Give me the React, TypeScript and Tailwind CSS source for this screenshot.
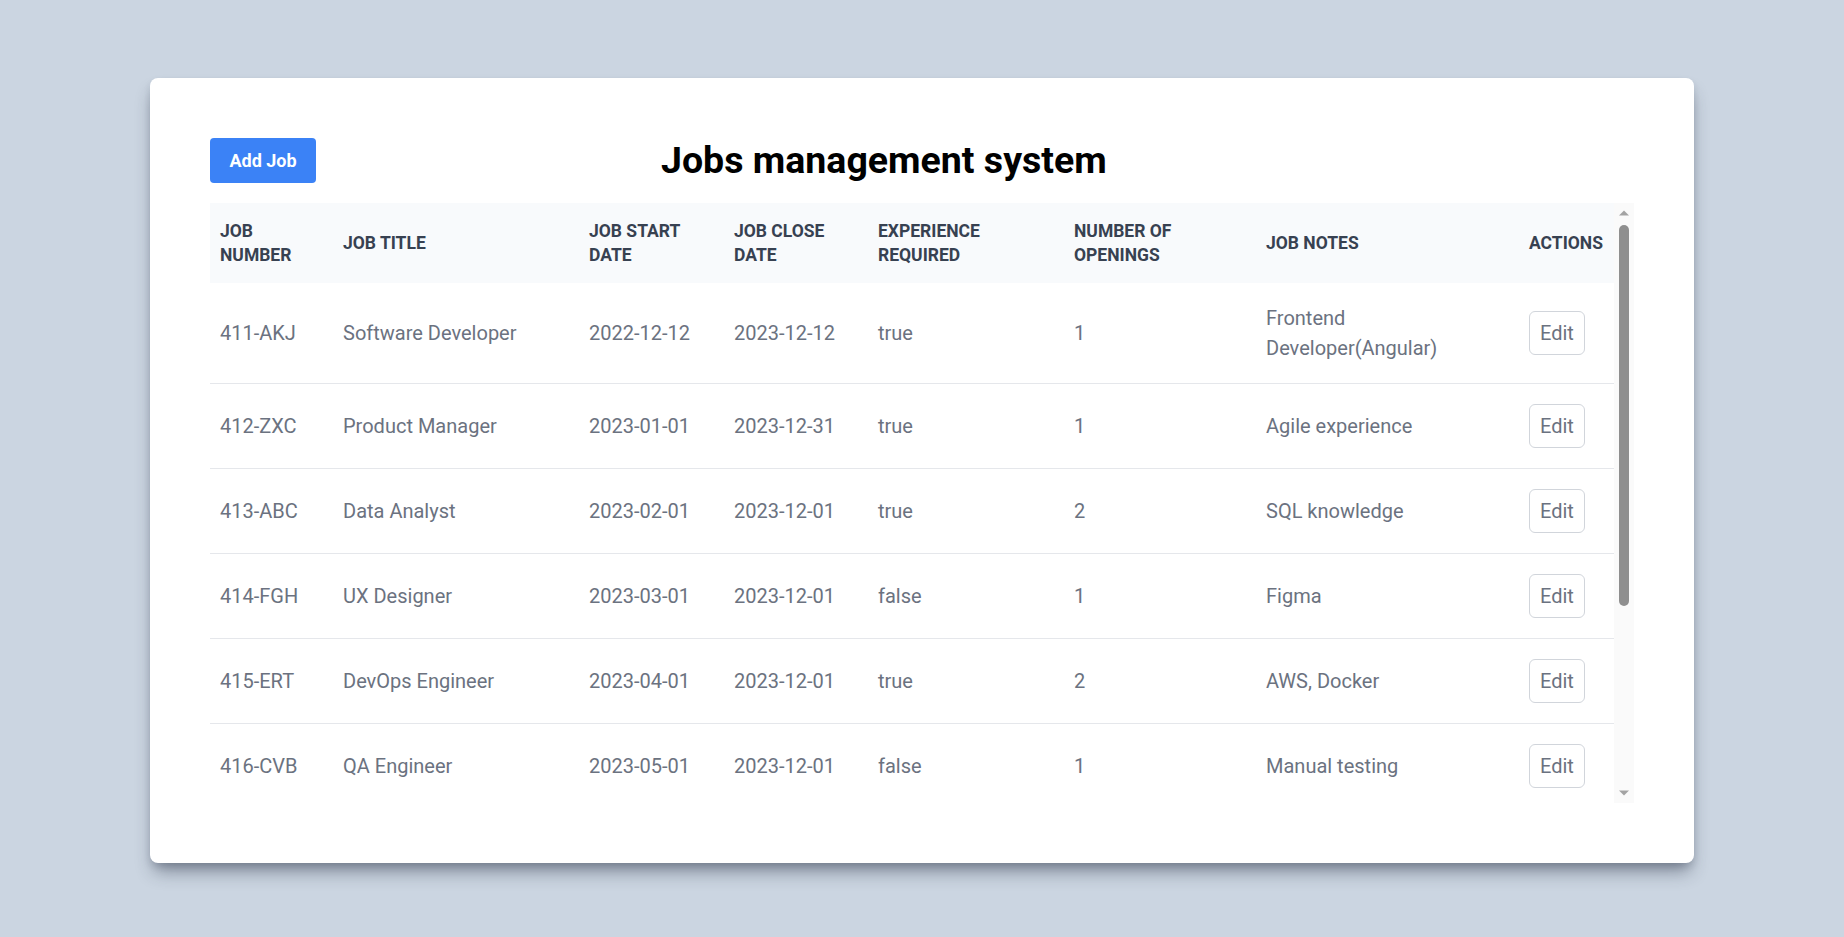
const jobs = [
  { num: "411-AKJ", title: "Software Developer", start: "2022-12-12", close: "2023-12-12", exp: "true", open: 1, notes: "Frontend Developer(Angular)" },
  { num: "412-ZXC", title: "Product Manager", start: "2023-01-01", close: "2023-12-31", exp: "true", open: 1, notes: "Agile experience" },
  { num: "413-ABC", title: "Data Analyst", start: "2023-02-01", close: "2023-12-01", exp: "true", open: 2, notes: "SQL knowledge" },
  { num: "414-FGH", title: "UX Designer", start: "2023-03-01", close: "2023-12-01", exp: "false", open: 1, notes: "Figma" },
  { num: "415-ERT", title: "DevOps Engineer", start: "2023-04-01", close: "2023-12-01", exp: "true", open: 2, notes: "AWS, Docker" },
  { num: "416-CVB", title: "QA Engineer", start: "2023-05-01", close: "2023-12-01", exp: "false", open: 1, notes: "Manual testing" },
  { num: "417-JKL", title: "Backend Developer", start: "2023-06-01", close: "2023-12-01", exp: "true", open: 3, notes: "Node.js, PostgreSQL" },
  { num: "418-MNO", title: "Support Specialist", start: "2023-07-01", close: "2023-12-01", exp: "false", open: 2, notes: "Customer service" },
  { num: "419-PQR", title: "Technical Writer", start: "2023-08-01", close: "2023-12-01", exp: "true", open: 1, notes: "Technical documentation and API guides" },
];

const headers = [
  { label: "Job Number", w: "w-[123px]" },
  { label: "Job Title", w: "w-[246px]" },
  { label: "Job Start Date", w: "w-[145px]" },
  { label: "Job Close Date", w: "w-[144px]" },
  { label: "Experience Required", w: "w-[196px]" },
  { label: "Number of Openings", w: "w-[192px]" },
  { label: "Job Notes", w: "w-[263px]" },
  { label: "Actions", w: "w-[95px]" },
];

// the browser hides real scrollbars in screenshots, so draw the classic one
const ScrollBar = () => (
  <div className="w-5 shrink-0 flex flex-col bg-[#fafafa]">
    <div className="h-5 flex items-center justify-center">
      <svg width="10" height="6" viewBox="0 0 10 6">
        <path d="M0 5.5h10L5 0.5z" fill="#a3a3a3" />
      </svg>
    </div>
    <div className="flex-1 pt-0.5">
      <div className="mx-auto w-[10px] h-[381px] rounded-full bg-[#8f8f8f]" />
    </div>
    <div className="h-5 flex items-center justify-center">
      <svg width="10" height="6" viewBox="0 0 10 6">
        <path d="M0 0.5h10L5 5.5z" fill="#a3a3a3" />
      </svg>
    </div>
  </div>
);

const App = () => {
  return (
    <div className="min-h-screen bg-[#cbd5e1] pt-[78px] font-['Roboto',sans-serif]">
      <div className="mx-auto w-[1544px] bg-white rounded-lg p-[60px] shadow-[0_12px_18px_-4px_rgba(30,41,59,0.45),0_4px_8px_-2px_rgba(30,41,59,0.2)]">
        <div className="flex items-center mb-5">
          <button className="w-[106px] h-[45px] rounded bg-[#3b82f6] text-white font-bold text-[18px]">
            Add Job
          </button>
          <h1 className="ml-[345px] text-[37.5px] font-bold text-black leading-none">
            Jobs management system
          </h1>
        </div>
        <div className="flex h-[600px]">
          <div className="flex-1 overflow-y-auto">
            <table className="table-fixed w-[1404px] text-left">
              <thead>
                <tr className="bg-[#f8fafc]">
                  {headers.map((h) => (
                    <th
                      key={h.label}
                      className={`${h.w} px-2.5 py-4 text-[17.5px] leading-6 font-bold uppercase text-[#374151]`}
                    >
                      {h.label}
                    </th>
                  ))}
                </tr>
              </thead>
              <tbody>
                {jobs.map((j) => (
                  <tr key={j.num} className="border-b border-[#e5e7eb] text-[20px] leading-[30px] text-[#6b7280]">
                    <td className="px-2.5 py-5">{j.num}</td>
                    <td className="px-2.5 py-5">{j.title}</td>
                    <td className="px-2.5 py-5">{j.start}</td>
                    <td className="px-2.5 py-5">{j.close}</td>
                    <td className="px-2.5 py-5">{j.exp}</td>
                    <td className="px-2.5 py-5">{j.open}</td>
                    <td className="px-2.5 py-5">{j.notes}</td>
                    <td className="px-2.5 py-5">
                      <button className="h-11 px-2.5 rounded-md border border-[#d1d5db] text-[20px] leading-[27px] text-[#6b7280]">
                        Edit
                      </button>
                    </td>
                  </tr>
                ))}
              </tbody>
            </table>
          </div>
          <ScrollBar />
        </div>
      </div>
    </div>
  );
};

export default App;
